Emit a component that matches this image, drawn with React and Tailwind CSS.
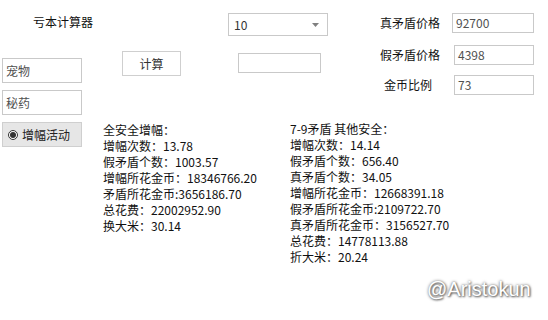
import React from "react";

function Box({ value, className = "" }) {
  return (
    <div
      className={`flex h-[20px] items-center border border-[#c9c9c9] bg-white px-[3px] text-[12px] text-[#505050] ${className}`}
    >
      {value}
    </div>
  );
}

const leftResults = [
  "全安全增幅：",
  "增幅次数：13.78",
  "假矛盾个数：1003.57",
  "增幅所花金币：18346766.20",
  "矛盾所花金币:3656186.70",
  "总花费：22002952.90",
  "换大米：30.14",
];

const rightResults = [
  "7-9矛盾 其他安全：",
  "增幅次数：14.14",
  "假矛盾个数：656.40",
  "真矛盾个数：34.05",
  "增幅所花金币：12668391.18",
  "假矛盾所花金币:2109722.70",
  "真矛盾所花金币：3156527.70",
  "总花费：14778113.88",
  "折大米：20.24",
];

export default function App() {
  return (
    <div className="relative h-[320px] w-[548px] overflow-hidden bg-white font-['Microsoft_YaHei','Noto_Sans_CJK_SC',sans-serif] text-[12px] text-[#111]">
      {/* top area */}
      <div className="flex h-[120px]">
        <div className="flex w-[103px] flex-col pl-[2px]">
          <div className="ml-[31px] mt-[14px] whitespace-nowrap leading-[16px]">亏本计算器</div>
          <Box value="宠物" className="mt-[28px] h-[25px] w-[80px] px-[1px]" />
          <Box value="秘药" className="mt-[7px] h-[25px] w-[80px] px-[1px]" />
        </div>

        <div className="w-[125px]">
          <button className="ml-[19px] mt-[51px] flex h-[25px] w-[59px] items-center justify-center border border-[#cfcfcf] bg-white text-[12px] text-[#333]">
            计算
          </button>
        </div>

        <div className="flex w-[152px] flex-col">
          <div className="mt-[13px] flex h-[23px] w-[100px] items-center justify-between border border-[#c9c9c9] bg-white pl-[5px] pr-[8px] text-[#333]">
            <span>10</span>
            <svg width="7" height="4" viewBox="0 0 7 4">
              <path d="M0 0h7L3.5 4z" fill="#808080" />
            </svg>
          </div>
          <Box value="" className="ml-[10px] mt-[17px] w-[83px]" />
        </div>

        <div className="flex flex-col">
          <div className="mt-[13px] flex items-center">
            <span className="whitespace-nowrap leading-[16px]">真矛盾价格</span>
            <Box value="92700" className="ml-[12px] w-[82px]" />
          </div>
          <div className="mt-[12px] flex items-center">
            <span className="whitespace-nowrap leading-[16px]">假矛盾价格</span>
            <Box value="4398" className="ml-[14px] w-[80px]" />
          </div>
          <div className="mt-[10px] flex items-center">
            <span className="ml-[4px] whitespace-nowrap leading-[16px]">金币比例</span>
            <Box value="73" className="ml-[22px] w-[80px]" />
          </div>
        </div>
      </div>

      {/* bottom area */}
      <div className="flex">
        <button className="ml-[2px] mt-[2px] flex h-[25px] w-[80px] items-center gap-[4px] border border-[#cfcfcf] bg-[#e6e6e6] pl-[5px] text-[12px] text-[#222]">
          <span className="flex h-[10px] w-[10px] items-center justify-center rounded-full border border-[#333] bg-white">
            <span className="h-[6px] w-[6px] rounded-full bg-[#333]" />
          </span>
          <span>增幅活动</span>
        </button>

        <div className="ml-[21px] mt-[2px] w-[187px] leading-[16px]">
          {leftResults.map((t) => (
            <div key={t} className="whitespace-nowrap">
              {t}
            </div>
          ))}
        </div>

        <div className="mt-[1px] leading-[16px]">
          {rightResults.map((t) => (
            <div key={t} className="whitespace-nowrap">
              {t}
            </div>
          ))}
        </div>
      </div>

      <div className="absolute left-[427px] top-[277px] font-['Liberation_Sans',Arial,sans-serif] text-[20px] leading-[24px] text-white [text-shadow:0_0_3px_#555,1px_1px_2px_#666]">
        @Aristokun
      </div>
    </div>
  );
}
